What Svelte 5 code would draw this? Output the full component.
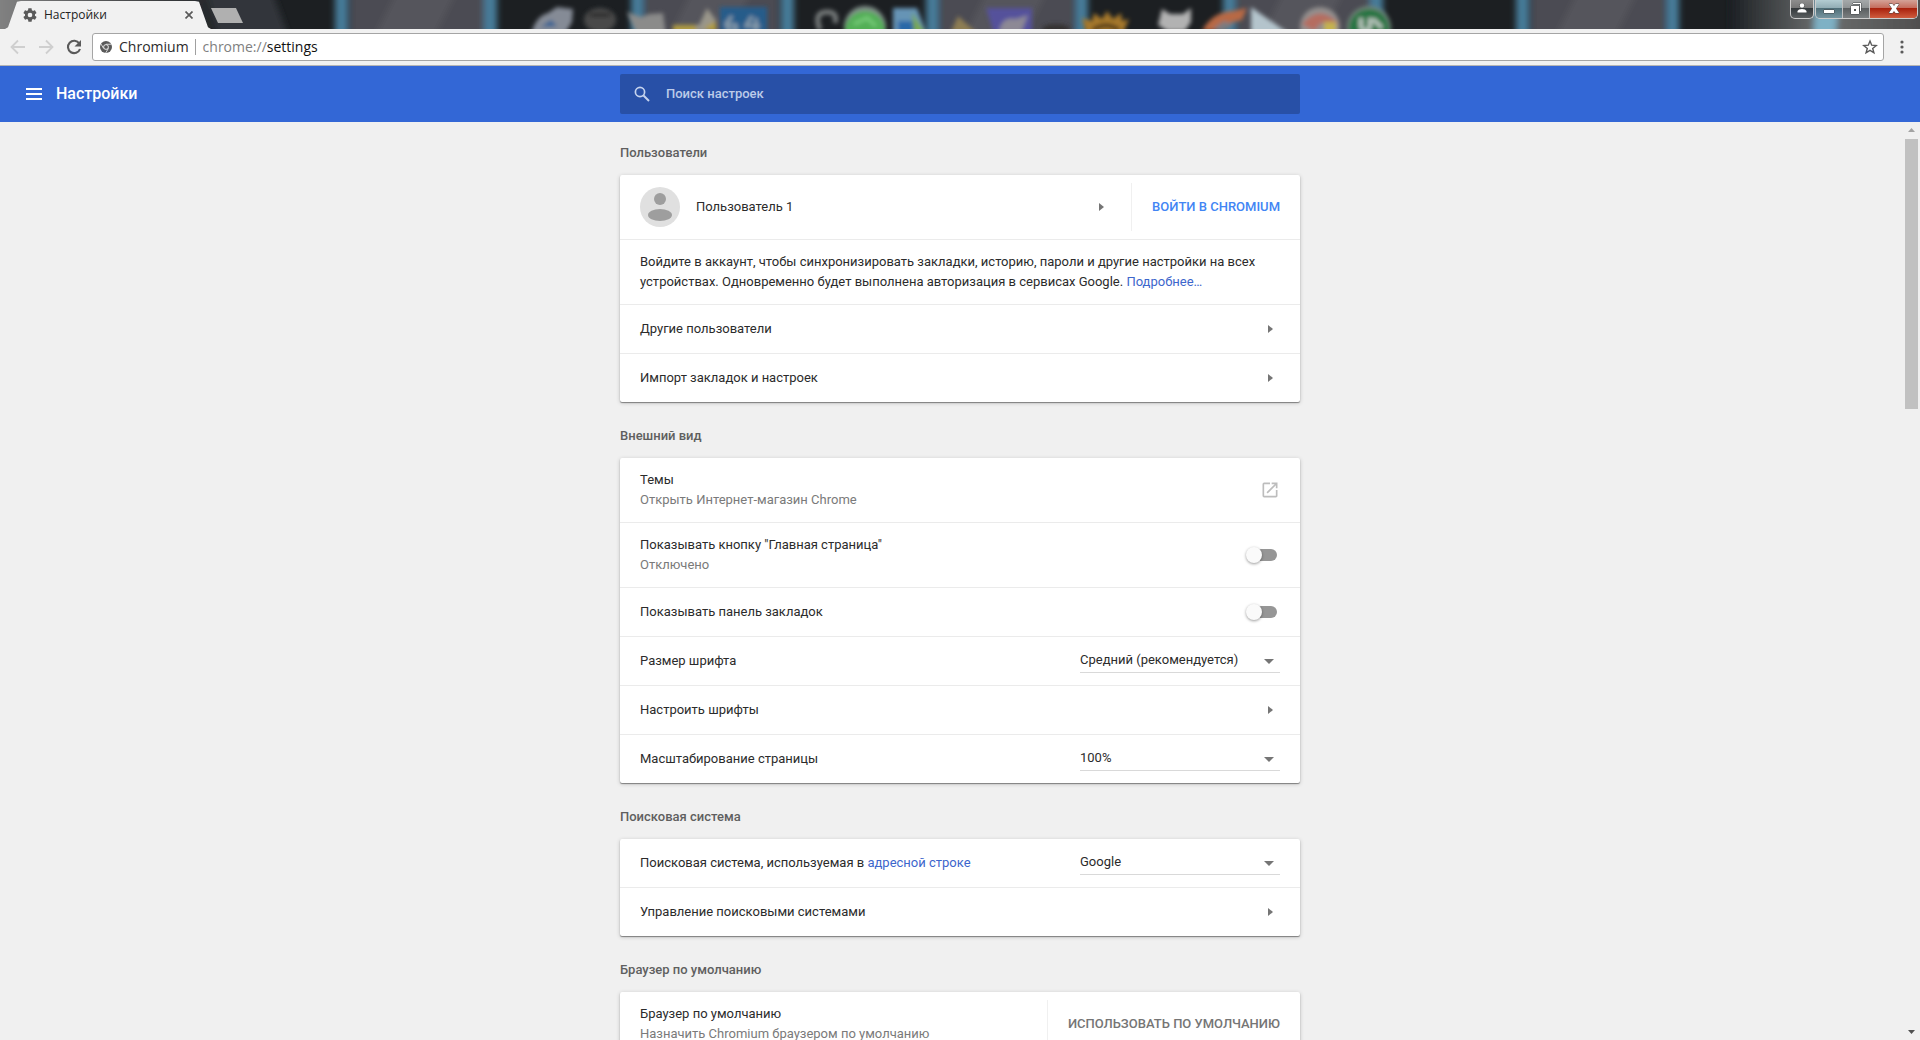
<script>
    const strips = [335, 484, 631, 781, 926, 1075, 1223, 1370, 1516, 1666];
    const panes = [350, 645, 940, 1237, 1531];

    const fontSizes = ['Очень мелкий', 'Мелкий', 'Средний (рекомендуется)', 'Крупный', 'Очень крупный'];
    const zoomLevels = ['50%', '75%', '90%', '100%', '125%', '150%', '200%'];
    const engines = ['Google', 'Яндекс', 'Mail.Ru', 'Bing'];

    const SECTIONS = [
        {
            title: 'Пользователи',
            rows: [
                { type: 'profile', label: 'Пользователь 1', action: 'Войти в Chromium' },
                {
                    type: 'note',
                    label: 'Войдите в аккаунт, чтобы синхронизировать закладки, историю, пароли и другие настройки на всех устройствах. Одновременно будет выполнена авторизация в сервисах Google.',
                    link: 'Подробнее…',
                },
                { type: 'nav', label: 'Другие пользователи' },
                { type: 'nav', label: 'Импорт закладок и настроек' },
            ],
        },
        {
            title: 'Внешний вид',
            rows: [
                { type: 'external', label: 'Темы', sub: 'Открыть Интернет-магазин Chrome' },
                { type: 'toggle', id: 'home', label: 'Показывать кнопку "Главная страница"', sub: 'Отключено' },
                { type: 'toggle', id: 'bookmarks', label: 'Показывать панель закладок' },
                { type: 'select', id: 'fontSize', label: 'Размер шрифта', options: fontSizes },
                { type: 'nav', label: 'Настроить шрифты' },
                { type: 'select', id: 'zoom', label: 'Масштабирование страницы', options: zoomLevels },
            ],
        },
        {
            title: 'Поисковая система',
            rows: [
                { type: 'select', id: 'engine', label: 'Поисковая система, используемая в', link: 'адресной строке', options: engines },
                { type: 'nav', label: 'Управление поисковыми системами' },
            ],
        },
        {
            title: 'Браузер по умолчанию',
            rows: [
                { type: 'action', label: 'Браузер по умолчанию', sub: 'Назначить Chromium браузером по умолчанию', action: 'Использовать по умолчанию' },
            ],
        },
    ];

    let values = {
        home: false,
        bookmarks: false,
        fontSize: 'Средний (рекомендуется)',
        zoom: '100%',
        engine: 'Google',
    };
    let address = 'settings';
    let query = '';
</script>

<div class="window">
    <div class="titlebar">
        <svg class="glass" viewBox="0 0 1920 29" preserveAspectRatio="xMidYMin slice" aria-hidden="true">
            <defs>
                <filter id="soft" x="-5%" y="-50%" width="110%" height="200%"><feGaussianBlur stdDeviation="3" /></filter>
                <filter id="icons" x="-5%" y="-50%" width="110%" height="200%"><feGaussianBlur stdDeviation="2" /></filter>
                <linearGradient id="left"><stop offset="0" stop-color="#858585" /><stop offset="1" stop-color="#1d2023" /></linearGradient>
                <linearGradient id="right"><stop offset="0" stop-color="#1c2024" /><stop offset=".45" stop-color="#6c6e6e" /><stop offset="1" stop-color="#4d4c4c" /></linearGradient>
            </defs>
            <rect width="1920" height="29" fill="#1c1f22" />
            <g filter="url(#soft)">
                <rect x="-10" y="-15" width="240" height="60" fill="url(#left)" />
                <path d="M205-14h65l22 60h-70z" fill="#30363a" />
                {#each panes as x}
                    <rect {x} y="-15" width="134" height="60" fill="#4c4c53" />
                    <path d="M{x + 50}-15h60l-30 60h-60z" fill="#54545b" />
                {/each}
                {#each strips as x}
                    <rect {x} y="-15" width="13" height="60" fill="#477b99" />
                {/each}
                <rect x="1730" y="-15" width="200" height="60" fill="url(#right)" />
                <path d="M1816-15h24l-5 60h-22z" fill="#7eb1c5" />
            </g>
            <g filter="url(#icons)">
                <path d="M531 34q5-18 17-21l9-6 16 2-1 13-7 12z" fill="#858b96" />
                <path d="M541 27l10-7 6 6z" fill="#315f92" />
                <ellipse cx="600" cy="20" rx="16" ry="12" fill="#484a4a" />
                <path d="M590 15h20" stroke="#222" stroke-width="3" />
                <path d="M627 12l14 5 8-3 14-1 3 22h-29z" fill="#8b8b8a" />
                <path d="M675 25h24l8-17 9 12-8 12h-31z" fill="#9a968a" />
                <path d="M673 25h23v8h-23zM704 28l12-7v12z" fill="#b19c43" />
                <rect x="720" y="7" width="47" height="30" fill="#285b8a" />
                <path d="M732 16l-6 8 3 7h7v-6h-8M752 16l-6 10h14M756 18v14" fill="none" stroke="#8da0ad" stroke-width="3" />
                <path d="M820 30q-7-18 7-18 11 0 8 11" fill="none" stroke="#777b7c" stroke-width="5" />
                <circle cx="865" cy="27" r="21" fill="#81908a" />
                <circle cx="865" cy="31" r="20" fill="#53af57" />
                <path d="M854 24l13-6 9 8" fill="none" stroke="#7bcf7e" stroke-width="3" />
                <path d="M893 8h24l10 26h-34z" fill="#6694b5" />
                <path d="M898 21h17v14h-17z" fill="#2c67a7" />
                <path d="M912 12l14 22h-12z" fill="#79a950" />
                <path d="M950 34l8-18 20 18z" fill="#8d7d53" />
                <path d="M986 8h46v26h-38z" fill="#55519b" />
                <path d="M999 33q2-17 17-14l12-4-7 18z" fill="#8d8995" />
                <ellipse cx="1056" cy="29" rx="14" ry="5" fill="#353331" />
                <path d="M1082 18l10 3 2-8 8 6 5-8 6 8 8-6 1 8 7-2-6 14h-37z" fill="#a6782c" />
                <path d="M1093 30q13-9 26 0" stroke="#463119" stroke-width="4" fill="none" />
                <path d="M1162 9l8 5h13l8-6v14l-6 9h-18l-9-6z" fill="#b2b2b2" />
                <path d="M1202 31q10-19 31-20l14-3-5 12-12 3-7 8z" fill="#b86945" />
                <path d="M1213 29l11-8 9 4-11 8z" fill="#797c81" />
                <path d="M1251 7l40 28h-40z" fill="#b4c4cc" />
                <circle cx="1320" cy="27" r="20" fill="#938f8e" />
                <path d="M1302 24q18-21 37 0l-18-1-7 8z" fill="#b56d61" />
                <path d="M1324 22h12v12h-12z" fill="#c4b24f" />
                <circle cx="1369" cy="28" r="22" fill="#72877b" />
                <circle cx="1369" cy="29" r="20" fill="#287542" />
                <path d="M1361 18v9q5 8 9 0v-9M1373 19l9 9" stroke="#bdc9c2" stroke-width="4" fill="none" />
            </g>
        </svg>

        <div class="tab">
            <svg class="gear" viewBox="0 0 24 24" width="16" height="16"><path fill="#5a5a5a" d="M19.4 13c0-.3.1-.6.1-1s0-.7-.1-1l2.100-1.700c.2-.1.200-.4.100-.6l-2-3.500c-.1-.2-.4-.3-.6-.2l-2.500 1c-.5-.4-1.100-.7-1.700-1L14.400 2.400c0-.2-.2-.4-.5-.4h-4c-.2 0-.4.200-.5.400L9.100 5c-.6.300-1.200.6-1.700 1l-2.500-1c-.2-.1-.5 0-.6.200l-2 3.500c-.1.200-.1.500.1.600L4.600 11c0 .3-.1.600-.1 1s0 .7.100 1l-2.200 1.700c-.2.100-.2.400-.1.600l2 3.500c.1.200.4.300.6.200l2.500-1c.5.400 1.100.7 1.700 1l.4 2.600c0 .2.200.4.500.4h4c.2 0 .5-.2.500-.4l.4-2.600c.6-.3 1.200-.6 1.700-1l2.500 1c.2.100.5 0 .6-.2l2-3.500c.1-.2.100-.5-.1-.6zM12 15.500a3.500 3.500 0 1 1 0-7 3.500 3.500 0 0 1 0 7z" /></svg>
            <span class="tab-title">Настройки</span>
            <button class="plain tab-close" aria-label="Закрыть вкладку">
                <svg viewBox="0 0 8 8" width="8" height="8"><path d="M.5.5l7 7m0-7l-7 7" stroke="#5a5a5a" stroke-width="1.700" /></svg>
            </button>
        </div>
        <button class="plain new-tab" aria-label="Новая вкладка"></button>

        <div class="controls">
            <button class="ctl user" aria-label="Пользователь">
                <svg viewBox="0 0 10 10" width="10" height="10"><circle cx="5" cy="2.500" r="2.200" /><path d="M.5 9.500V8q1-2 4.500-2t4.500 2v1.500z" /></svg>
            </button>
            <div class="ctl-group">
                <button class="ctl min" aria-label="Свернуть">
                    <svg viewBox="0 0 12 12" width="12" height="12"><path d="M1 8h10v3H1z" /></svg>
                </button>
                <button class="ctl max" aria-label="Восстановить">
                    <svg viewBox="0 0 12 12" width="12" height="12"><path fill-rule="evenodd" d="M1 4h8v8H1zm3 3v2h2V7zM3 1h8v8h-1V2H3z" /></svg>
                </button>
                <button class="ctl close" aria-label="Закрыть">
                    <svg viewBox="0 0 12 12" width="12" height="12"><path d="M1 2h3.500L6 4l1.500-2H11L8 6.500l3 4.500H7.500L6 9l-1.500 2H1l3-4.500z" /></svg>
                </button>
            </div>
        </div>
    </div>

    <div class="toolbar">
        <div class="nav">
            <button class="plain" aria-label="Назад" disabled>
                <svg viewBox="0 0 16 16" width="16" height="16"><path d="M15 8H2m6-6.500L1.500 8 8 14.500" fill="none" stroke="#cfcfcf" stroke-width="1.800" /></svg>
            </button>
            <button class="plain" aria-label="Вперёд" disabled>
                <svg viewBox="0 0 16 16" width="16" height="16"><path d="M1 8h13M8 1.500L14.500 8 8 14.500" fill="none" stroke="#cfcfcf" stroke-width="1.800" /></svg>
            </button>
            <button class="plain" aria-label="Обновить">
                <svg viewBox="0 0 16 16" width="16" height="16"><path d="M13.300 4.500A6.200 6.200 0 1 0 14 10" fill="none" stroke="#5a5a5a" stroke-width="2.100" /><path d="M15 1v6.500H8.500z" fill="#5a5a5a" /></svg>
            </button>
        </div>
        <div class="omnibox">
            <svg viewBox="0 0 24 24" width="12" height="12" aria-hidden="true"><circle cx="12" cy="12" r="12" fill="#5a5a5a" /><path d="M12 6.500h11M7.200 14.800L1.700 5.500M16.800 14.800L11.300 24" stroke="#fff" stroke-width="1.500" /><circle cx="12" cy="12" r="4.800" fill="#5a5a5a" stroke="#fff" stroke-width="1.700" /></svg>
            <span class="origin">Chromium</span>
            <label class="scheme" for="address">chrome://</label>
            <input id="address" type="text" bind:value={address} spellcheck="false" />
            <button class="plain" aria-label="Добавить в закладки">
                <svg viewBox="0 0 16 16" width="16" height="16"><path d="M8 2l1.700 4.200 4.500.3-3.500 2.900 1.200 4.400L8 11.400l-3.900 2.400 1.200-4.400-3.500-2.900 4.500-.3z" fill="none" stroke="#5a5a5a" stroke-width="1.400" /></svg>
            </button>
        </div>
        <button class="plain menu" aria-label="Меню Chromium">
            <svg viewBox="0 0 4 14" width="4" height="14"><circle cx="2" cy="2" r="1.600" /><circle cx="2" cy="7" r="1.600" /><circle cx="2" cy="12" r="1.600" /></svg>
        </button>
    </div>

    <header>
        <div class="brand">
            <button class="plain" aria-label="Главное меню">
                <svg viewBox="0 0 16 12" width="16" height="12"><path d="M0 0h16v2H0zM0 5h16v2H0zM0 10h16v2H0z" fill="#fff" /></svg>
            </button>
            <h1>Настройки</h1>
        </div>
        <div class="search">
            <svg viewBox="0 0 16 16" width="16" height="16" aria-hidden="true"><circle cx="6" cy="6" r="4.600" fill="none" stroke="#c5d3ee" stroke-width="1.700" /><path d="M9.500 9.500l5.500 5.500" stroke="#c5d3ee" stroke-width="2" /></svg>
            <input type="text" placeholder="Поиск настроек" aria-label="Поиск настроек" bind:value={query} />
        </div>
    </header>

    <div class="content">
        <main>
            {#each SECTIONS as section}
                <section>
                    <h2>{section.title}</h2>
                    <div class="card">
                        {#each section.rows as row}
                            <div class="row" class:tall={row.sub || row.type === 'profile' || row.type === 'note'}>
                                {#if row.type === 'profile'}
                                    <svg class="avatar" viewBox="0 0 40 40" width="40" height="40" aria-hidden="true"><circle cx="20" cy="20" r="20" fill="#e0e0e0" /><circle cx="20" cy="12" r="6" fill="#9e9e9e" /><ellipse cx="20" cy="28" rx="12" ry="6" fill="#9e9e9e" /></svg>
                                {/if}
                                {#if row.type === 'note'}
                                    <p class="text">{row.label} <a href="#more">{row.link}</a></p>
                                {:else}
                                    <div class="text">
                                        {#if row.id}
                                            <label for={row.id}>{row.label}</label>
                                        {:else}
                                            <span>{row.label}</span>
                                        {/if}
                                        {#if row.link}<a href="#more">{row.link}</a>{/if}
                                        {#if row.sub}<div class="sub">{row.sub}</div>{/if}
                                    </div>
                                {/if}

                                {#if row.type === 'nav' || row.type === 'profile'}
                                    <button class="plain" aria-label={row.label}>
                                        <svg viewBox="0 0 20 20" width="20" height="20"><path d="M8 6l5 4-5 4z" fill="#757575" /></svg>
                                    </button>
                                {:else if row.type === 'external'}
                                    <button class="plain" aria-label={row.label}>
                                        <svg viewBox="0 0 24 24" width="20" height="20"><path fill="#bdbdbd" d="M19 19H5V5h7V3H5a2 2 0 0 0-2 2v14a2 2 0 0 0 2 2h14c1.100 0 2-.9 2-2v-7h-2zM14 3v2h3.600l-9.800 9.800 1.400 1.400L19 6.400V10h2V3z" /></svg>
                                    </button>
                                {:else if row.type === 'toggle'}
                                    <input id={row.id} class="toggle" type="checkbox" bind:checked={values[row.id]} />
                                {:else if row.type === 'select'}
                                    <div class="select">
                                        <select id={row.id} bind:value={values[row.id]}>
                                            {#each row.options as o}
                                                <option value={o}>{o}</option>
                                            {/each}
                                        </select>
                                        <svg viewBox="0 0 10 5" width="10" height="5" aria-hidden="true"><path d="M0 0h10L5 5z" fill="#757575" /></svg>
                                    </div>
                                {/if}

                                {#if row.action}
                                    <div class="action">
                                        <button class="plain" class:primary={row.type === 'profile'}>{row.action}</button>
                                    </div>
                                {/if}
                            </div>
                        {/each}
                    </div>
                </section>
            {/each}
        </main>
        <div class="scrollbar" aria-hidden="true">
            <svg viewBox="0 0 17 17" width="17" height="17"><path d="M5 10h7L8.500 6z" fill="#a3a3a3" /></svg>
            <div class="track"><div class="thumb"></div></div>
            <svg viewBox="0 0 17 17" width="17" height="17"><path d="M5 7h7l-3.500 4z" fill="#505050" /></svg>
        </div>
    </div>
</div>

<style>
    :global(body) {
        margin: 0;
        background: #f0f0f0;
    }
    .window {
        display: flex;
        flex-direction: column;
        height: 100vh;
        overflow: hidden;
        font-family: Roboto, "Liberation Sans", sans-serif;
        font-size: 13px;
        line-height: 20px;
        color: #2b2b2b;
    }
    svg {
        display: block;
        flex: none;
    }
    .plain {
        background: none;
        border: none;
        padding: 0;
        font: inherit;
        color: inherit;
        cursor: pointer;
    }

    .titlebar {
        position: relative;
        display: flex;
        flex: none;
        height: 29px;
        overflow: hidden;
    }
    .glass {
        position: absolute;
        inset: 0;
        width: 100%;
        height: 100%;
    }
    .tab {
        position: relative;
        display: flex;
        align-items: center;
        box-sizing: border-box;
        width: 206px;
        margin: 1px 0 0 5px;
        padding: 0 18px 0 17px;
        background: #f1f1f1;
        clip-path: polygon(0 100%, 3px 94%, 12px 3%, 16px 0, 190px 0, 194px 3%, 203px 94%, 100% 100%);
    }
    .tab-title {
        flex: 1;
        margin-left: 6px;
        font: 12px/16px "Open Sans", "Noto Sans", sans-serif;
        color: #222;
    }
    .new-tab {
        position: relative;
        width: 32px;
        height: 15px;
        margin-top: 8px;
        background: #b0b0b0;
        clip-path: polygon(0 0, 78% 0, 100% 100%, 22% 100%);
    }
    .controls {
        position: relative;
        display: flex;
        gap: 1px;
        height: 19px;
        margin: 0 2px 0 auto;
    }
    .ctl-group {
        display: flex;
        border: 1px solid #ccc;
        border-top: none;
        border-radius: 0 0 5px 5px;
        overflow: hidden;
    }
    .ctl {
        display: flex;
        align-items: center;
        justify-content: center;
        width: 27px;
        padding: 0 0 2px;
        border: none;
        border-right: 1px solid #c0c0c0;
        background: linear-gradient(#8d8d8d 0, #777 42%, #33383b 46%, #5b5f60 100%);
    }
    .ctl svg {
        fill: #fff;
        stroke: #45484a;
        stroke-width: 1px;
        paint-order: stroke;
        overflow: visible;
    }
    .ctl.user {
        width: 24px;
        border: 1px solid #ccc;
        border-top: none;
        border-radius: 0 0 5px 5px;
    }
    .ctl.min {
        background: linear-gradient(#b3ccd2 0, #93aeb6 42%, #4f6e78 46%, #7795a0 100%);
    }
    .ctl.max {
        background: linear-gradient(#a5a9aa 0, #909495 42%, #5a5e60 46%, #7b7f80 100%);
    }
    .ctl.close {
        width: 47px;
        border-right: none;
        background: linear-gradient(#d4a297 0, #c56e5f 42%, #a8200c 46%, #cf5c3e 100%);
    }

    .toolbar {
        display: flex;
        align-items: center;
        flex: none;
        box-sizing: border-box;
        height: 37px;
        background: #f1f1f1;
        border-bottom: 1px solid #b5b5b5;
    }
    .nav {
        display: flex;
        gap: 12px;
        padding: 0 10px;
    }
    .omnibox {
        display: flex;
        align-items: center;
        flex: 1;
        box-sizing: border-box;
        height: 28px;
        padding: 0 5px 0 7px;
        border: 1px solid #a5a5a5;
        border-radius: 3px;
        background: #fff;
        font: 14px/20px "Open Sans", "Noto Sans", sans-serif;
    }
    .origin {
        margin: 0 7px;
        padding-right: 6px;
        line-height: 16px;
        border-right: 1px solid #a0a0a0;
    }
    .scheme {
        color: #808080;
    }
    .omnibox input {
        flex: 1;
        min-width: 0;
        padding: 0;
        border: none;
        outline: none;
        background: none;
        font: inherit;
        color: #111;
    }
    .menu {
        display: flex;
        justify-content: center;
        width: 36px;
        fill: #5a5a5a;
    }

    header {
        display: grid;
        grid-template-columns: 1fr minmax(0, 680px) 1fr;
        align-items: center;
        flex: none;
        height: 56px;
        background: #3367d6;
        color: #fff;
    }
    .brand {
        display: flex;
        align-items: center;
        gap: 14px;
        padding-left: 26px;
    }
    h1 {
        margin: 0;
        font-size: 16px;
        font-weight: 500;
    }
    .search {
        display: flex;
        align-items: center;
        gap: 16px;
        height: 40px;
        padding-left: 14px;
        border-radius: 2px;
        background: #2850a7;
    }
    .search input {
        flex: 1;
        padding: 0;
        border: none;
        outline: none;
        background: none;
        font: 500 13px/20px Roboto, sans-serif;
        color: #fff;
    }
    .search input::placeholder {
        color: #bccbe9;
        opacity: 1;
    }

    .content {
        display: grid;
        grid-template-columns: 1fr minmax(0, 680px) 1fr;
        flex: 1;
        min-height: 0;
        background: #f0f0f0;
    }
    main {
        display: flex;
        flex-direction: column;
        grid-column: 2;
        gap: 24px;
        min-height: 0;
        padding-top: 21px;
    }
    h2 {
        margin: 0 0 12px;
        font-size: 13px;
        font-weight: 500;
        line-height: 20px;
        color: #5f5f5f;
    }
    .card {
        border-radius: 2px;
        background: #fff;
        box-shadow: 0 1px 1px rgba(0, 0, 0, 0.4), 0 1px 4px rgba(0, 0, 0, 0.2);
    }
    .row {
        display: flex;
        align-items: center;
        min-height: 48px;
        padding: 0 20px;
    }
    .row.tall {
        min-height: 64px;
    }
    .row + .row {
        border-top: 1px solid #ebebeb;
    }
    .avatar {
        margin-right: 16px;
    }
    .text {
        flex: 1;
        margin: 0;
    }
    .sub {
        color: #7a7a7a;
    }
    a {
        color: #3d66cc;
        text-decoration: none;
    }
    .action {
        display: flex;
        align-items: center;
        height: 48px;
        margin-left: 20px;
        padding-left: 20px;
        border-left: 1px solid #f0f0f0;
    }
    .action button {
        font-weight: 500;
        text-transform: uppercase;
        color: #757575;
    }
    .action .primary {
        color: #4285f4;
    }
    .toggle {
        position: relative;
        appearance: none;
        width: 28px;
        height: 12px;
        margin: 0 3px 0 0;
        border-radius: 8px;
        background: #969696;
        cursor: pointer;
    }
    .toggle::before {
        content: '';
        position: absolute;
        top: -2px;
        left: -3px;
        width: 16px;
        height: 16px;
        border-radius: 50%;
        background: #fafafa;
        box-shadow: 0 1px 3px rgba(0, 0, 0, 0.4);
    }
    .toggle:checked {
        background: #a0c2fa;
    }
    .toggle:checked::before {
        left: 14px;
        background: #4285f4;
    }
    .select {
        display: grid;
        align-items: center;
        width: 200px;
    }
    .select select,
    .select svg {
        grid-area: 1 / 1;
    }
    .select select {
        appearance: none;
        height: 24px;
        padding: 0 0 2px;
        border: none;
        border-bottom: 1px solid #d9d9d9;
        border-radius: 0;
        background: none;
        font: inherit;
        color: inherit;
    }
    .select svg {
        justify-self: end;
        margin-right: 6px;
        pointer-events: none;
    }
    .scrollbar {
        display: flex;
        flex-direction: column;
        justify-self: end;
        width: 17px;
    }
    .track {
        flex: 1;
    }
    .thumb {
        height: 30.5%;
        margin: 0 2px;
        background: #c1c1c1;
    }
</style>
